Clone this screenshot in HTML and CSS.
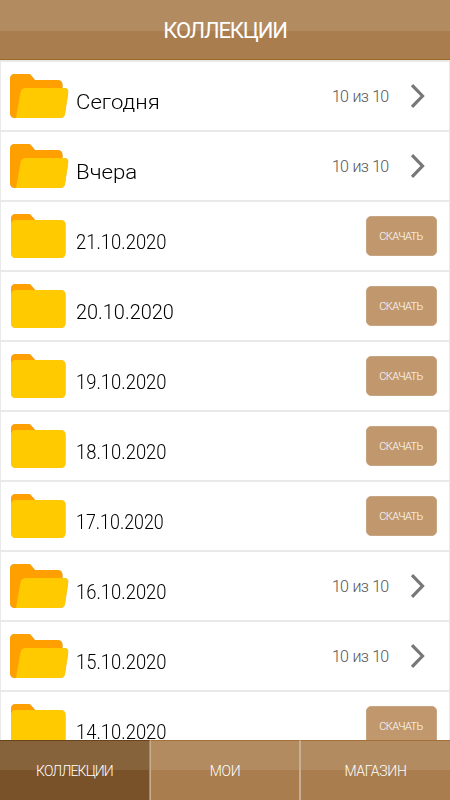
FILE: index.html
```html
<!DOCTYPE html>
<html lang="ru">
<head>
<meta charset="utf-8">
<title>Коллекции</title>
<link rel="stylesheet" href="styles.css">
</head>
<body>
<svg class="defs" width="0" height="0">
  <symbol id="open" viewBox="0 0 60 48">
    <path fill="#ffa000" d="M5 2H18.500Q20 2 21 3.200L25 8H47Q52.500 8 52.500 13V20L15 46H5Q0 46 0 41V7Q0 2 5 2Z"/>
    <path fill="#ffca00" d="M16 16H54Q59 16 58.200 21L55 42Q54.400 46 50 46H6L10.500 20.500Q11.300 16 16 16Z"/>
  </symbol>
  <symbol id="closed" viewBox="0 0 60 48">
    <path fill="#ffa000" d="M6 2H18.500Q20 2 21 3.200L27 10V18H1V7Q1 2 6 2Z"/>
    <path fill="#ffca00" d="M6 8H50.500Q55.500 8 55.500 13V41Q55.500 46 50.500 46H6Q1 46 1 41V13Q1 8 6 8Z"/>
  </symbol>
  <symbol id="arrow" viewBox="0 0 16 26">
    <path fill="none" stroke="#777" stroke-width="3.200" d="M2 2.200L12.500 13L2 23.800"/>
  </symbol>
</svg>
<div class="app">
  <header class="header"><h1 class="title">КОЛЛЕКЦИИ</h1></header>
  <main class="list">
    <div class="row"><svg class="folder"><use href="#open"/></svg><span class="name today">Сегодня</span><span class="count">10 из 10</span><svg class="arrow"><use href="#arrow"/></svg></div>
    <div class="row"><svg class="folder"><use href="#open"/></svg><span class="name yesterday">Вчера</span><span class="count">10 из 10</span><svg class="arrow"><use href="#arrow"/></svg></div>
    <div class="row"><svg class="folder"><use href="#closed"/></svg><span class="name">21.10.2020</span><button class="download">СКАЧАТЬ</button></div>
    <div class="row"><svg class="folder"><use href="#closed"/></svg><span class="name wide">20.10.2020</span><button class="download">СКАЧАТЬ</button></div>
    <div class="row"><svg class="folder"><use href="#closed"/></svg><span class="name">19.10.2020</span><button class="download">СКАЧАТЬ</button></div>
    <div class="row"><svg class="folder"><use href="#closed"/></svg><span class="name">18.10.2020</span><button class="download">СКАЧАТЬ</button></div>
    <div class="row"><svg class="folder"><use href="#closed"/></svg><span class="name narrow">17.10.2020</span><button class="download">СКАЧАТЬ</button></div>
    <div class="row"><svg class="folder"><use href="#open"/></svg><span class="name">16.10.2020</span><span class="count">10 из 10</span><svg class="arrow"><use href="#arrow"/></svg></div>
    <div class="row"><svg class="folder"><use href="#open"/></svg><span class="name">15.10.2020</span><span class="count">10 из 10</span><svg class="arrow"><use href="#arrow"/></svg></div>
    <div class="row"><svg class="folder"><use href="#closed"/></svg><span class="name">14.10.2020</span><button class="download">СКАЧАТЬ</button></div>
  </main>
  <nav class="tabs">
    <a class="tab active"><span>КОЛЛЕКЦИИ</span></a>
    <a class="tab"><span>МОИ</span></a>
    <a class="tab"><span>МАГАЗИН</span></a>
  </nav>
</div>
</body>
</html>
```
FILE: styles.css
```css
* { box-sizing: border-box; }
body { margin: 0; font-family: Roboto, "Liberation Sans", sans-serif; font-weight: 300; background: #fff; }
.defs { display: block; }
.app { height: 800px; display: flex; flex-direction: column; overflow: hidden; }
.header {
  height: 60px; flex: none; display: flex; align-items: center; justify-content: center;
  padding-top: 3px; border-bottom: 1px solid #9b6a20;
  background: linear-gradient(#b28b60 0 31px, #a97d4d 31px);
}
.title { margin: 0; color: #fff; font-size: 22px; line-height: 30px; font-weight: 400; letter-spacing: -1.2px; }
.list { flex: 1; min-height: 0; overflow: hidden; }
.row {
  height: 70px; display: flex; align-items: flex-start;
  border: 1px solid #e9e9e9; border-top-width: 2px; border-bottom: 0; padding-left: 9px;
}
.folder { width: 60px; height: 48px; margin-top: 10px; flex: none; filter: drop-shadow(0 .5px .5px #bbb); }
.name {
  margin: 33px auto 0 6px; font-size: 21px; line-height: 15px; color: #000;
  white-space: nowrap; transform: scaleX(.877); transform-origin: left;
}
.today { transform: scaleX(1.055); }
.yesterday { transform: scaleX(1.06); }
.wide { transform: scaleX(.947); }
.narrow { transform: scaleX(.85); }
.count { margin-top: 25px; font-size: 16px; line-height: 20px; color: #555; width: 56px; white-space: nowrap; letter-spacing: -.8px; word-spacing: 1.2px; }
.arrow { width: 16px; height: 26px; margin: 21px 23px 0 22px; flex: none; }
.download {
  width: 71px; height: 40px; margin: 14px 12.500px 0 0; padding: 2px 0 0; border: 1px solid #c7a583; border-radius: 5px;
  background: #c1986d; color: #fff; font: 300 11px/36px Roboto, sans-serif; letter-spacing: -.6px;
}
.tabs { height: 60px; flex: none; display: grid; grid-template-columns: repeat(3, 1fr); }
.tab {
  display: flex; align-items: center; justify-content: center; padding-top: 1px;
  border-top: 1px solid #a37137; color: #fff; font-size: 14px; letter-spacing: -.3px;
  background: linear-gradient(#b28b60 0 29px, #a97d4d 29px);
}
.tab + .tab { border-left: 1px solid #c8ae93; }
.tab:nth-child(2) { border-right: 1px solid #c8ae93; }
.active { background: linear-gradient(#87633b 0 29px, #79522a 29px); border-top-color: #68431d; border-right: 1px solid #a18b75; letter-spacing: -.85px; }
```
